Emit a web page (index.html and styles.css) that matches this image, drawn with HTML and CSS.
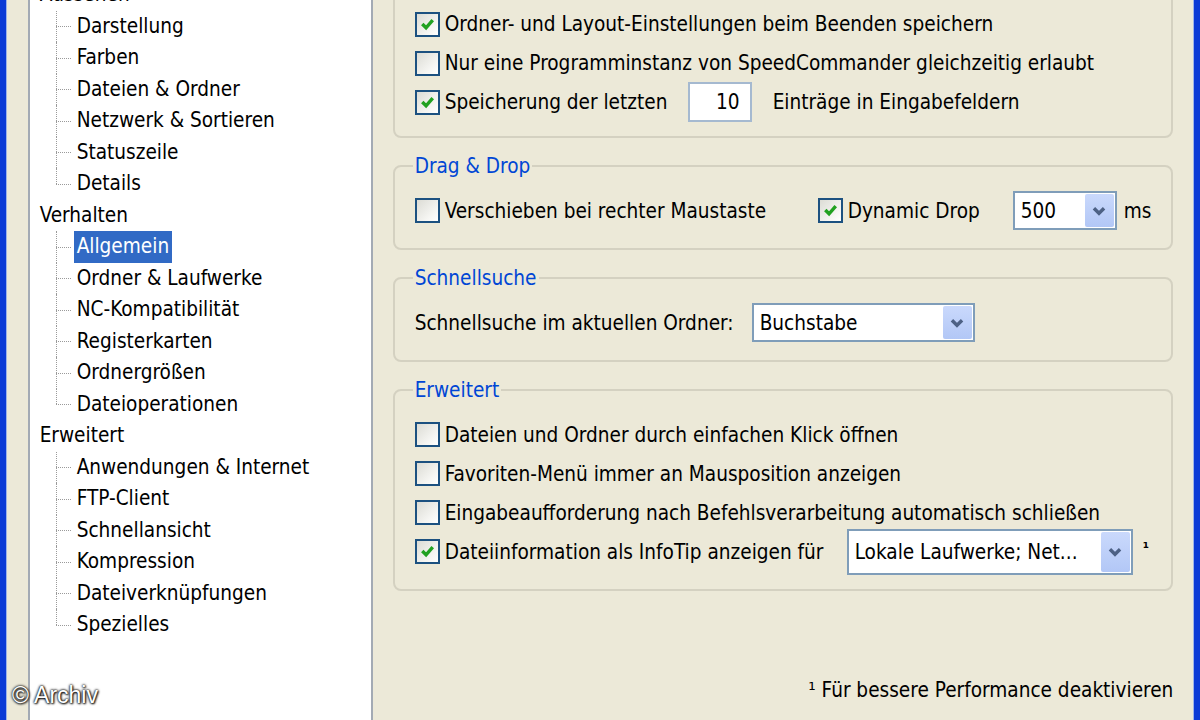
FILE: index.html
```html
<!DOCTYPE html>
<html lang="de">
  <head>
    <meta charset="UTF-8" />
    <title>Einstellungen</title>
    <link rel="stylesheet" href="styles.css">
  </head>
  <body>
    <div class="screen">
      <div class="frame frame-left"></div>

      <div class="dialog">
        <nav class="tree">
          <ul>
            <li>
              <span class="label">Aussehen</span>
              <ul class="children">
                <li><span class="label">Darstellung</span></li>
                <li><span class="label">Farben</span></li>
                <li><span class="label">Dateien &amp; Ordner</span></li>
                <li><span class="label">Netzwerk &amp; Sortieren</span></li>
                <li><span class="label">Statuszeile</span></li>
                <li><span class="label">Details</span></li>
              </ul>
            </li>
            <li>
              <span class="label">Verhalten</span>
              <ul class="children">
                <li><span class="label selected">Allgemein</span></li>
                <li><span class="label">Ordner &amp; Laufwerke</span></li>
                <li><span class="label">NC-Kompatibilität</span></li>
                <li><span class="label">Registerkarten</span></li>
                <li><span class="label">Ordnergrößen</span></li>
                <li><span class="label">Dateioperationen</span></li>
              </ul>
            </li>
            <li>
              <span class="label">Erweitert</span>
              <ul class="children">
                <li><span class="label">Anwendungen &amp; Internet</span></li>
                <li><span class="label">FTP-Client</span></li>
                <li><span class="label">Schnellansicht</span></li>
                <li><span class="label">Kompression</span></li>
                <li><span class="label">Dateiverknüpfungen</span></li>
                <li><span class="label">Spezielles</span></li>
              </ul>
            </li>
          </ul>
        </nav>

        <main class="settings">
          <fieldset class="group group-top">
            <div class="row">
              <span class="check on"><svg viewBox="0 0 20 20"><path d="M4.5 9.5 L8.5 13.5 L15.5 5.5" /></svg></span>
              <span>Ordner- und Layout-Einstellungen beim Beenden speichern</span>
            </div>
            <div class="row">
              <span class="check"></span>
              <span>Nur eine Programminstanz von SpeedCommander gleichzeitig erlaubt</span>
            </div>
            <div class="row">
              <span class="check on"><svg viewBox="0 0 20 20"><path d="M4.5 9.5 L8.5 13.5 L15.5 5.5" /></svg></span>
              <span class="lbl lbl-history">Speicherung der letzten</span>
              <span class="edit">10</span>
              <span class="after-edit">Einträge in Eingabefeldern</span>
            </div>
          </fieldset>

          <fieldset class="group">
            <legend>Drag &amp; Drop</legend>
            <div class="row">
              <span class="check"></span>
              <span class="lbl lbl-move">Verschieben bei rechter Maustaste</span>
              <span class="check on"><svg viewBox="0 0 20 20"><path d="M4.5 9.5 L8.5 13.5 L15.5 5.5" /></svg></span>
              <span class="lbl lbl-drop">Dynamic Drop</span>
              <span class="combo combo-ms">
                <span class="combo-value">500</span>
                <span class="combo-btn"><svg viewBox="0 0 16 16"><path d="M3.5 5.5 L8 10 L12.5 5.5" /></svg></span>
              </span>
              <span class="unit">ms</span>
            </div>
          </fieldset>

          <fieldset class="group">
            <legend>Schnellsuche</legend>
            <div class="row">
              <span class="lbl lbl-search">Schnellsuche im aktuellen Ordner:</span>
              <span class="combo combo-search">
                <span class="combo-value">Buchstabe</span>
                <span class="combo-btn"><svg viewBox="0 0 16 16"><path d="M3.5 5.5 L8 10 L12.5 5.5" /></svg></span>
              </span>
            </div>
          </fieldset>

          <fieldset class="group">
            <legend>Erweitert</legend>
            <div class="row">
              <span class="check"></span>
              <span>Dateien und Ordner durch einfachen Klick öffnen</span>
            </div>
            <div class="row">
              <span class="check"></span>
              <span>Favoriten-Menü immer an Mausposition anzeigen</span>
            </div>
            <div class="row">
              <span class="check"></span>
              <span>Eingabeaufforderung nach Befehlsverarbeitung automatisch schließen</span>
            </div>
            <div class="row">
              <span class="check on"><svg viewBox="0 0 20 20"><path d="M4.5 9.5 L8.5 13.5 L15.5 5.5" /></svg></span>
              <span class="lbl lbl-info">Dateiinformation als InfoTip anzeigen für</span>
              <span class="combo combo-info">
                <span class="combo-value">Lokale Laufwerke; Net...</span>
                <span class="combo-btn"><svg viewBox="0 0 16 16"><path d="M3.5 5.5 L8 10 L12.5 5.5" /></svg></span>
              </span>
              <span class="mark">¹</span>
            </div>
          </fieldset>

          <p class="footnote">¹ Für bessere Performance deaktivieren</p>
        </main>
      </div>

      <div class="frame frame-right"></div>

      <div class="watermark">© Archiv</div>
    </div>
  </body>
</html>
```

FILE: styles.css
```css
* {
  box-sizing: border-box;
}

html,
body {
  margin: 0;
  height: 100%;
}

body {
  background: #ece9d8; /* XP dialog beige */
  font-family: "DejaVu Sans Condensed", "DejaVu Sans", sans-serif;
  font-stretch: condensed;
  font-size: 20.6px;
  color: #000;
  overflow: hidden;
}

.screen {
  position: relative;
  display: flex;
  height: 720px;
  overflow: hidden;
}

/* blue window frame on both sides */
.frame-left {
  width: 7px;
  background: #0b3bd6;
  border-right: 1px solid #9db4ea;
}

.frame-right {
  width: 7px;
  background: #0b3bd6;
  border-left: 1px solid #9db4ea;
}

.dialog {
  flex: 1;
  display: flex;
  padding-left: 21px;
}

/* left tree */
.tree {
  width: 345px;
  flex: none;
  margin: -40px 0;
  padding: 17px 7px 0;
  background: #fff;
  border: 2px solid #a3aab4;
}

.tree ul {
  list-style: none;
  margin: 0;
  padding: 0;
}

.tree li {
  position: relative;
  display: flex;
  flex-direction: column;
  align-items: flex-start;
}

.tree .label {
  height: 31.5px;
  line-height: 31.5px;
  padding: 0 3px;
  white-space: nowrap;
}

.tree .children {
  margin-left: 37px;
}

.tree .children li::before {
  content: "";
  position: absolute;
  left: -18px;
  top: 0;
  bottom: 0;
  border-left: 1px dotted #9a9a9a;
}

.tree .children li:last-child::before {
  bottom: 50%;
}

.tree .children li::after {
  content: "";
  position: absolute;
  left: -18px;
  top: 50%;
  width: 15px;
  border-top: 1px dotted #9a9a9a;
}

.tree .selected {
  background: #316ac5;
  color: #fff;
}

/* right side */
.settings {
  flex: 1;
  display: flex;
  flex-direction: column;
  padding: 0 20px;
}

.group {
  margin: 0 0 16px;
  padding: 13.5px 20px 17.5px;
  border: 2px solid #d4d1c1;
  border-radius: 8px;
  min-width: 0;
}

.group legend {
  color: #0046d5;
  padding: 0 2px;
  margin-left: -2px;
  line-height: 24px;
}

.group-top {
  margin-top: -30px;
  padding-top: 32.5px;
  padding-bottom: 14px;
}

.row {
  display: flex;
  align-items: center;
  height: 39px;
  white-space: nowrap;
}

.check {
  flex: none;
  display: flex;
  align-items: center;
  justify-content: center;
  width: 25px;
  height: 25px;
  margin-right: 5px;
  border: 2px solid #1c5180;
  background: linear-gradient(135deg, #dcdcd5, #f6f6f3 70%, #fff);
}

.check svg {
  width: 19px;
  height: 19px;
  fill: none;
  stroke: #21a121;
  stroke-width: 3.6;
}

.lbl {
  flex: none;
}

.lbl-history {
  width: 243px;
}

.lbl-move {
  width: 373px;
}

.lbl-drop {
  width: 165px;
}

.lbl-search {
  width: 337px;
}

.lbl-info {
  width: 402px;
}

.edit {
  flex: none;
  width: 64px;
  height: 40px;
  line-height: 36px;
  padding-right: 10px;
  text-align: right;
  background: #fff;
  border: 2px solid #a5b9d0;
}

.after-edit {
  margin-left: 21px;
}

/* combo boxes */
.combo {
  flex: none;
  display: flex;
  height: 39px;
  padding: 1px;
  background: #fff;
  border: 2px solid #7f9db9;
}

.combo-value {
  flex: 1;
  display: flex;
  align-items: center;
  padding-left: 5px;
}

.combo-btn {
  width: 29px;
  display: flex;
  align-items: center;
  justify-content: center;
  background: linear-gradient(#cad9fc, #b2c7f6);
  border-radius: 2px;
}

.combo-btn svg {
  width: 18px;
  height: 18px;
  fill: none;
  stroke: #4d6185;
  stroke-width: 3;
}

.combo-ms {
  width: 104px;
}

.combo-search {
  width: 223px;
}

.combo-info {
  width: 286px;
  height: 46px;
}

.unit {
  margin-left: 7px;
}

.mark {
  margin-left: 10px;
  margin-top: -8px;
  font-size: 16px;
  font-weight: bold;
}

.footnote {
  margin: auto 0 18px;
  line-height: 24px;
  text-align: right;
}

/* photo credit on top of the screenshot */
.watermark {
  position: absolute;
  left: 12px;
  top: 682px;
  font-family: "Liberation Sans", Arial, sans-serif;
  font-size: 23px;
  color: #fff;
  text-shadow: 0 0 2px #000, 0 0 3px #000, 1px 1px 2px #333;
}
```
